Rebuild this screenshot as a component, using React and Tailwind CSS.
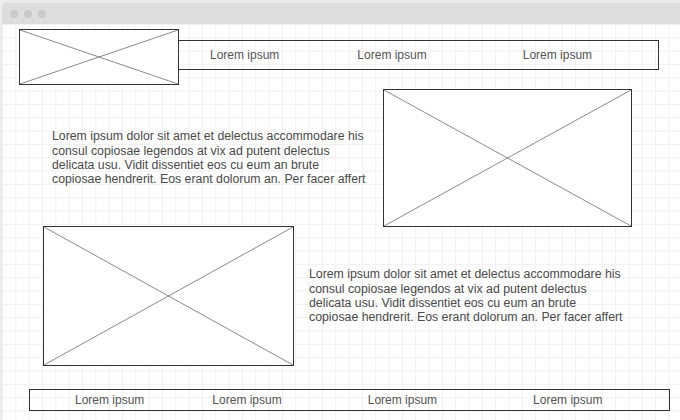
import React from 'react';

const font = { fontFamily: '"Liberation Sans", Arial, sans-serif' };

const Placeholder = ({ className }) => (
  <div className={`border border-[#333333] bg-white shrink-0 ${className}`}>
    <svg className="block w-full h-full" viewBox="0 0 100 100" preserveAspectRatio="none">
      <line x1="0" y1="0" x2="100" y2="100" stroke="#8a8a8a" strokeWidth="1" vectorEffect="non-scaling-stroke" />
      <line x1="100" y1="0" x2="0" y2="100" stroke="#8a8a8a" strokeWidth="1" vectorEffect="non-scaling-stroke" />
    </svg>
  </div>
);

const Paragraph = ({ className }) => (
  <p className={`text-[12.3px] leading-[14.4px] text-[#4a4a4a] whitespace-nowrap ${className}`}>
    Lorem ipsum dolor sit amet et delectus accommodare his<br />
    consul copiosae legendos at vix ad putent delectus<br />
    delicata usu. Vidit dissentiet eos cu eum an brute<br />
    copiosae hendrerit. Eos erant dolorum an. Per facer affert
  </p>
);

export default function App() {
  return (
    <div className="w-[680px] h-[420px] overflow-hidden bg-[#ececec] pt-[3px] pl-[2px]" style={font}>
      <div className="h-full flex flex-col">
        {/* Title bar */}
        <div className="h-[21px] bg-[#dddddd] rounded-tl-[4px] flex items-center pl-[8px] gap-[6px] shrink-0">
          <span className="w-[8px] h-[8px] rounded-full bg-[#c9c9c9]" />
          <span className="w-[8px] h-[8px] rounded-full bg-[#c9c9c9]" />
          <span className="w-[8px] h-[8px] rounded-full bg-[#c9c9c9]" />
        </div>

        {/* Canvas */}
        <div className="flex-1 bg-white bg-[linear-gradient(to_right,#f0f0f0_1px,transparent_1px),linear-gradient(to_bottom,#f0f0f0_1px,transparent_1px)] bg-[size:13.333px_13.333px]">
          {/* Header */}
          <div className="flex items-start pt-[5px] pl-[17px]">
            <Placeholder className="w-[160px] h-[56px] relative z-10" />
            <nav className="-ml-px mt-[11px] w-[481px] h-[30px] border border-[#333333] flex items-center pl-[31px] text-[12px] text-[#555555]">
              <span>Lorem ipsum</span>
              <span className="ml-[78px]">Lorem ipsum</span>
              <span className="ml-[96px]">Lorem ipsum</span>
            </nav>
          </div>

          {/* Row 2 */}
          <div className="flex items-center mt-[4px] pl-[50px]">
            <div className="w-[331px]">
              <Paragraph />
            </div>
            <Placeholder className="w-[249px] h-[138px]" />
          </div>

          {/* Row 3 */}
          <div className="flex items-center -mt-px pl-[41px]">
            <Placeholder className="w-[251px] h-[140px]" />
            <Paragraph className="ml-[15px]" />
          </div>

          {/* Footer */}
          <div className="mt-[23px] ml-[27px] w-[641px] h-[22px] border border-[#333333] flex items-center pl-[45px] text-[12px] text-[#555555]">
            <span>Lorem ipsum</span>
            <span className="ml-[68px]">Lorem ipsum</span>
            <span className="ml-[86px]">Lorem ipsum</span>
            <span className="ml-[96px]">Lorem ipsum</span>
          </div>
        </div>
      </div>
    </div>
  );
}
